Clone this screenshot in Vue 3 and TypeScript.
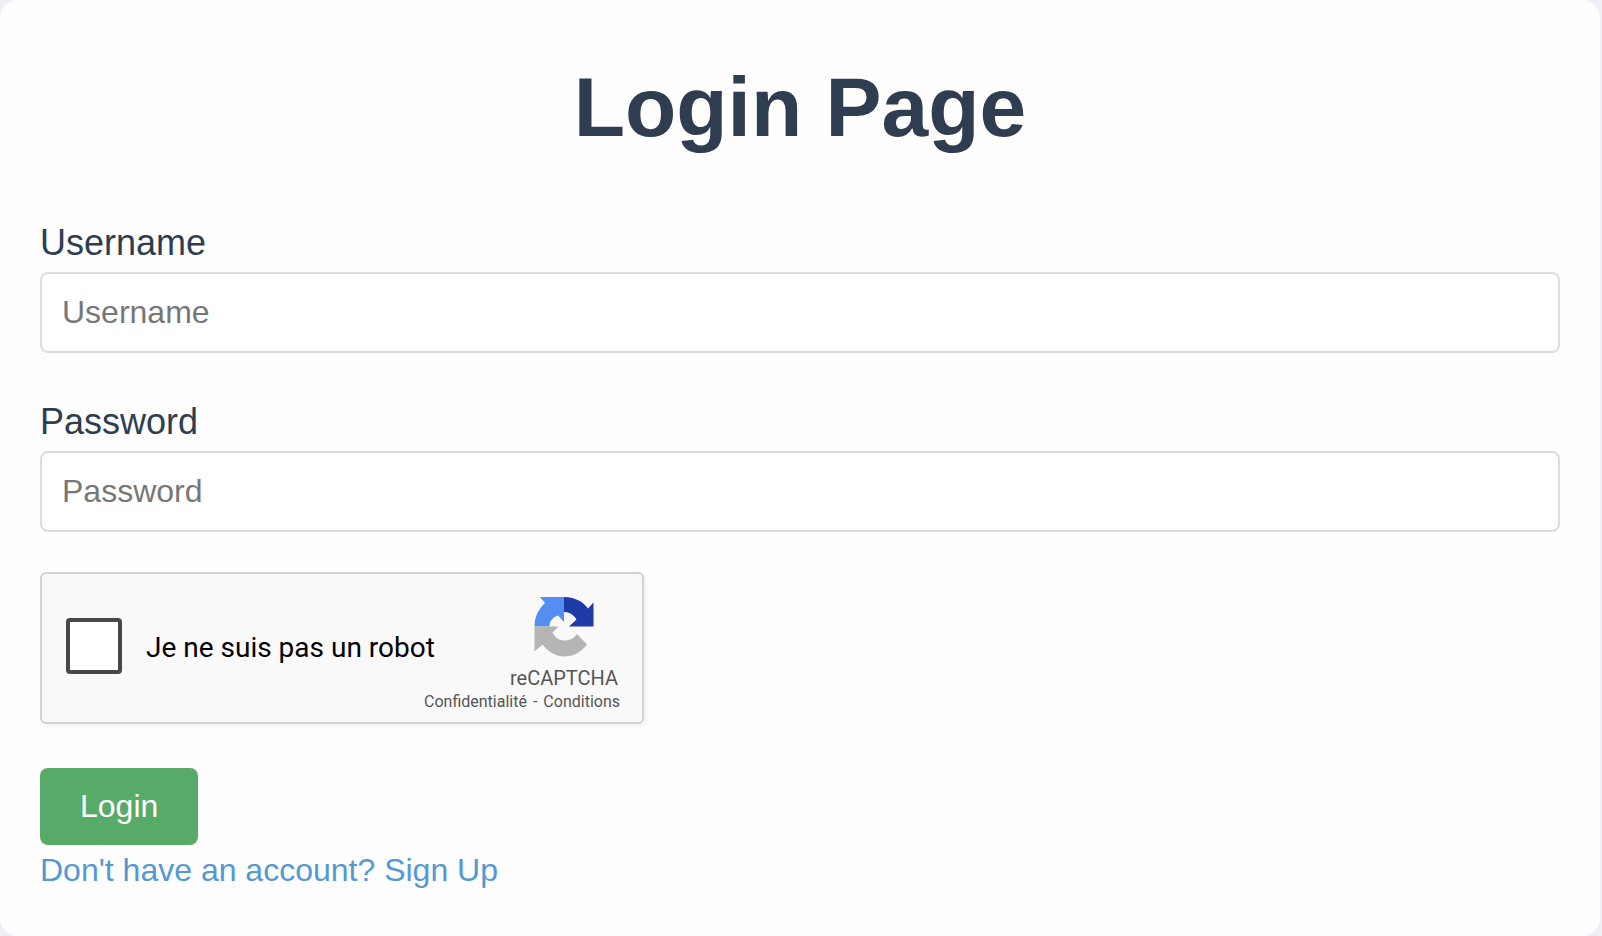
<script setup lang="ts">
import { ref } from 'vue'

const username = ref('')
const password = ref('')
const notRobot = ref(false)
</script>

<template>
  <main class="card">
    <h1 class="title">Login Page</h1>
    <form class="form" @submit.prevent>
      <div class="field">
        <label for="username">Username</label>
        <input id="username" v-model="username" type="text" placeholder="Username" autocomplete="username" />
      </div>
      <div class="field">
        <label for="password">Password</label>
        <input id="password" v-model="password" type="password" placeholder="Password" autocomplete="current-password" />
      </div>

      <div class="captcha">
        <div class="check">
          <input id="robot" v-model="notRobot" type="checkbox" />
          <label for="robot">Je ne suis pas un robot</label>
        </div>
        <div class="brand">
          <div class="mark">
            <svg class="logo" viewBox="0 0 60 60" aria-hidden="true">
              <path fill="#1f3ba8" d="M30 0 C40 0 48.500 4 54 11.500 L59.500 5.500 V29.500 H35 L42.500 22.500 C39.500 17.500 35.500 15 30 15 Z" />
              <path fill="#558ef0" d="M6 0 H30 V25 L24 18.500 C18.500 20.500 15.500 24 15.500 29.500 H0.500 C0.500 20.500 4 12.500 11 6 Z" />
              <path fill="#b5b5b5" d="M0.500 29.500 H24.500 L18.500 35.500 C21 40.500 25 43.500 30 43.500 C35.500 43.500 40 41.500 43 37 L53 47.500 C47 55.500 39.500 59.500 30 59.500 C22.500 59.500 15 55.500 8.500 47.500 L0.500 54.500 Z" />
            </svg>
            <span class="name">reCAPTCHA</span>
          </div>
          <div class="terms">
            <a href="#privacy">Confidentialité</a>
            <span>-</span>
            <a href="#terms">Conditions</a>
          </div>
        </div>
      </div>

      <button class="submit" type="submit">Login</button>
    </form>
    <a class="signup" href="#signup">Don't have an account? Sign Up</a>
  </main>
</template>

<style>
body {
  background: #f0f0f6;
}
</style>

<style scoped>
.card {
  box-sizing: border-box;
  min-height: 100vh;
  margin-right: 2px;
  padding: 59px 40px 40px;
  border-radius: 18px;
  background: #fefefe;
  color: #2f3d50;
  font-family: "Liberation Sans", Arial, sans-serif;
}

.title {
  margin: 0 0 67px;
  font-size: 84px;
  line-height: 96px;
  text-align: center;
}

.form {
  display: flex;
  flex-direction: column;
  align-items: flex-start;
}

.field {
  display: flex;
  flex-direction: column;
  gap: 8px;
  width: 100%;
  margin-bottom: 48px;
}

.field + .captcha {
  margin-top: -8px;
}

.field label {
  font-size: 36px;
  line-height: 42px;
}

.field input {
  box-sizing: border-box;
  width: 100%;
  height: 81px;
  padding: 0 20px;
  border: 2px solid #dcdcdc;
  border-radius: 8px;
  background: #fff;
  color: #2f3d50;
  font: 32px "Liberation Sans", Arial, sans-serif;
}

.field input::placeholder {
  color: #777;
  opacity: 1;
}

.captcha {
  display: grid;
  box-sizing: border-box;
  width: 604px;
  max-width: 100%;
  height: 152px;
  margin-bottom: 44px;
  border: 2px solid #d3d3d3;
  border-radius: 6px;
  background: #f9f9f9;
  box-shadow: 2px 2px 4px rgba(0, 0, 0, 0.06);
  font-family: Roboto, sans-serif;
}

.check,
.brand {
  grid-area: 1 / 1;
}

.check {
  display: flex;
  align-items: flex-start;
  justify-self: start;
  gap: 24px;
  padding: 44px 0 0 24px;
  color: #000;
  font-size: 28px;
  line-height: 60px;
}

.check input {
  appearance: none;
  box-sizing: border-box;
  width: 56px;
  height: 56px;
  margin: 0;
  border: 4px solid #484848;
  border-radius: 4px;
  background: #fff;
}

.check input:checked {
  background: #558ef0;
}

.brand {
  display: flex;
  flex-direction: column;
  align-items: flex-end;
  justify-self: end;
  align-self: start;
  gap: 2px;
  padding: 23px 22px 0 0;
  color: #555;
}

.mark {
  display: flex;
  flex-direction: column;
  align-items: center;
  gap: 9px;
  width: 112px;
}

.logo {
  display: block;
  width: 60px;
  height: 60px;
}

.name {
  font-size: 20px;
  line-height: 24px;
}

.terms {
  display: flex;
  gap: 6px;
  font-size: 16px;
  line-height: 20px;
}

.terms a {
  color: inherit;
  text-decoration: none;
}

.submit {
  height: 77px;
  padding: 0 40px;
  border: 0;
  border-radius: 8px;
  background: #58aa69;
  color: #fff;
  font: 32px "Liberation Sans", Arial, sans-serif;
}

.signup {
  display: inline-block;
  margin-top: 5px;
  color: #5499d2;
  font-size: 32px;
  line-height: 40px;
  text-decoration: none;
}
</style>
